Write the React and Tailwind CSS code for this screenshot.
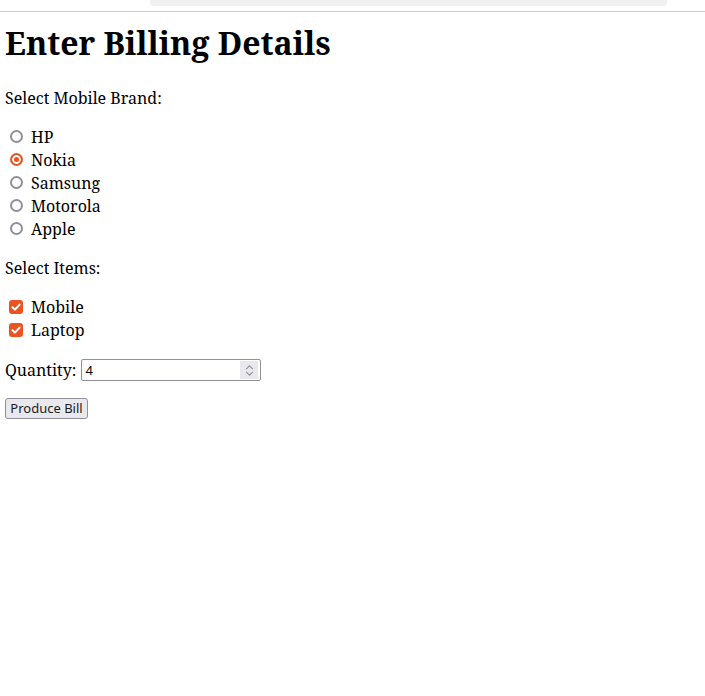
import React, { useState } from 'react';

const brands = ['HP', 'Nokia', 'Samsung', 'Motorola', 'Apple'];

export default function App() {
  const [brand, setBrand] = useState('Nokia');
  const [items, setItems] = useState({ Mobile: true, Laptop: true });
  const [qty, setQty] = useState(4);

  return (
    <div className="min-h-[696px] bg-white text-black font-['Noto_Serif',serif]">
      {/* top strip */}
      <div className="h-[12px] border-b border-[#cccccc]">
        <div className="ml-[150px] w-[517px] h-[6px] bg-[#f1f1f1] rounded-b-[4px]" />
      </div>

      <div className="px-[5px]">
        <h1 className="text-[32px] font-bold leading-[37px] mt-[12px] mb-[28px]">Enter Billing Details</h1>

        <p className="text-[16px] leading-[19px]">Select Mobile Brand:</p>
        <div className="mt-[17px] flex flex-col">
          {brands.map((b) => (
            <label key={b} className="flex items-center h-[23px] text-[16px]">
              <input
                type="radio"
                name="brand"
                checked={brand === b}
                onChange={() => setBrand(b)}
                className="appearance-none ml-[5px] mr-[8px] w-[13px] h-[13px] rounded-full border-2 border-[#8f8f9d] checked:border-[#e95420] checked:bg-[#e95420] checked:shadow-[inset_0_0_0_2px_white]"
              />
              {b}
            </label>
          ))}
        </div>

        <p className="text-[16px] leading-[19px] mt-[19px]">Select Items:</p>
        <div className="mt-[17px] flex flex-col">
          {['Mobile', 'Laptop'].map((it) => (
            <label key={it} className="flex items-center h-[23px] text-[16px]">
              <span className="relative ml-[4px] mr-[8px] w-[14px] h-[14px]">
                <input
                  type="checkbox"
                  checked={items[it]}
                  onChange={() => setItems({ ...items, [it]: !items[it] })}
                  className="appearance-none block w-[14px] h-[14px] rounded-[3px] border-2 border-[#8f8f9d] checked:border-[#e95420] checked:bg-[#e95420]"
                />
                {items[it] && (
                  <svg viewBox="0 0 14 14" className="absolute inset-0 w-[14px] h-[14px] pointer-events-none">
                    <path d="M3.5 7.2 L6 9.6 L10.6 4.6" fill="none" stroke="white" strokeWidth="2" strokeLinecap="round" strokeLinejoin="round" />
                  </svg>
                )}
              </span>
              {it}
            </label>
          ))}
        </div>

        <div className="mt-[17px] flex items-center text-[16px]">
          <span className="mr-[5px]">Quantity:</span>
          <div className="flex items-center w-[180px] h-[22px] border border-[#8f8f9d] rounded-[2px] bg-white">
            <input
              type="number"
              value={qty}
              onChange={(e) => setQty(e.target.value)}
              className="flex-1 min-w-0 h-full px-[3px] text-[13px] font-['Noto_Sans',sans-serif] outline-none [appearance:textfield] [&::-webkit-inner-spin-button]:appearance-none [&::-webkit-outer-spin-button]:appearance-none"
            />
            <div className="w-[18px] h-[18px] mr-[2px] bg-[#e9e9ed] flex flex-col items-center justify-center gap-[1px]">
              <svg viewBox="0 0 10 6" className="w-[9px] h-[5px]">
                <path d="M1 5 L5 1 L9 5" fill="none" stroke="#8f8f9d" strokeWidth="1.3" />
              </svg>
              <svg viewBox="0 0 10 6" className="w-[9px] h-[5px]">
                <path d="M1 1 L5 5 L9 1" fill="none" stroke="#8f8f9d" strokeWidth="1.3" />
              </svg>
            </div>
          </div>
        </div>

        <button className="mt-[16px] w-[83px] h-[21px] border border-[#8f8f9d] rounded-[3px] bg-[#e9e9ed] text-[13px] font-['Noto_Sans',sans-serif] leading-none text-[#1b1b1b]">
          Produce Bill
        </button>
      </div>
    </div>
  );
}
